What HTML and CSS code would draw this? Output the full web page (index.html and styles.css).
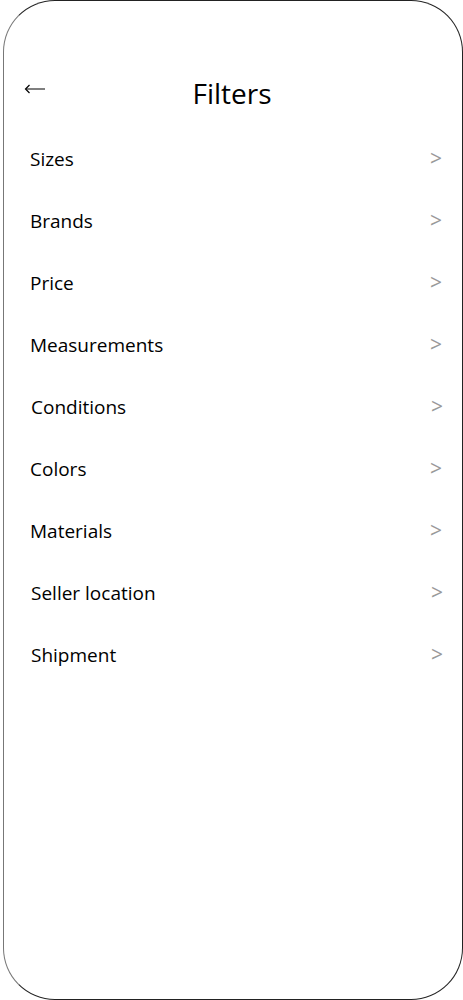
FILE: index.html
```html
<!DOCTYPE html>
<html>
<head>
<meta charset="utf-8">
<link rel="stylesheet" href="styles.css">
</head>
<body>
<div class="phone">
  <header class="header">
    <svg class="back" width="22" height="12" viewBox="0 0 22 12" aria-label="Back">
      <path d="M2 6 H21" stroke="#000" stroke-width="1.2" fill="none"/>
      <path d="M5.5 2 L1.5 6 L5.5 10" stroke="#000" stroke-width="1.2" fill="none"/>
    </svg>
    <h1 class="title">Filters</h1>
  </header>
  <ul class="list">
    <li class="row"><span class="label">Sizes</span><span class="chev">&gt;</span></li>
    <li class="row"><span class="label">Brands</span><span class="chev">&gt;</span></li>
    <li class="row"><span class="label">Price</span><span class="chev">&gt;</span></li>
    <li class="row"><span class="label">Measurements</span><span class="chev">&gt;</span></li>
    <li class="row shift"><span class="label">Conditions</span><span class="chev">&gt;</span></li>
    <li class="row"><span class="label">Colors</span><span class="chev">&gt;</span></li>
    <li class="row"><span class="label">Materials</span><span class="chev">&gt;</span></li>
    <li class="row shift"><span class="label">Seller location</span><span class="chev">&gt;</span></li>
    <li class="row shift"><span class="label">Shipment</span><span class="chev">&gt;</span></li>
  </ul>
</div>
</body>
</html>
```
FILE: styles.css
```css
html, body {
  margin: 0;
  padding: 0;
  background: #fff;
}
body {
  font-family: "Open Sans", "Liberation Sans", sans-serif;
  color: #000;
}
.phone {
  box-sizing: border-box;
  margin-left: 3px;
  width: 460px;
  height: 1000px;
  border: 1px solid #222;
  border-left-color: #777;
  border-radius: 52px;
  overflow: hidden;
}
.header {
  position: relative;
  height: 127px;
  display: flex;
  justify-content: center;
}
.back {
  position: absolute;
  left: 20px;
  top: 82px;
}
.title {
  margin: 73px 0 0 0;
  font-size: 28px;
  font-weight: 400;
  line-height: 38px;
  padding-right: 2px;
}
.list {
  list-style: none;
  margin: 0;
  padding: 0;
}
.row {
  height: 62px;
  display: flex;
  align-items: center;
  justify-content: space-between;
  padding: 0 20px 0 26px;
  font-size: 19px;
}
.row.shift {
  padding-left: 27px;
  padding-right: 19px;
}
.label {
  line-height: 24px;
}
.chev {
  color: #999;
  font-size: 21px;
  line-height: 24px;
  margin-top: -3px;
}
```
